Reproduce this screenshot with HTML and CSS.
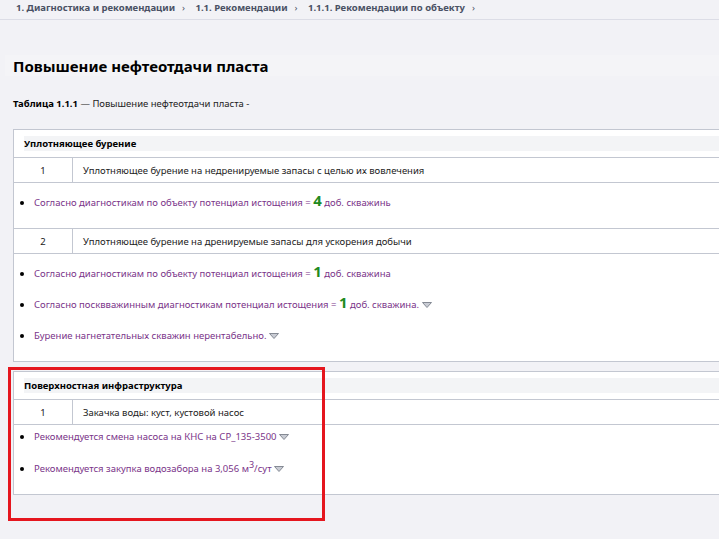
FILE: index.html
```html
<!DOCTYPE html>
<html lang="ru">
<head>
<meta charset="UTF-8">
<meta name="viewport" content="width=device-width, initial-scale=1.0">
<title>Повышение нефтеотдачи пласта</title>
<link rel="stylesheet" href="styles.css">
</head>
<body>
<div class="breadcrumbs">
    <span class="crumb">1. Диагностика и рекомендации</span><span class="sep">›</span>
    <span class="crumb">1.1. Рекомендации</span><span class="sep">›</span>
    <span class="crumb">1.1.1. Рекомендации по объекту</span><span class="sep">›</span>
</div>

<div class="page">
    <h1 class="title">Повышение нефтеотдачи пласта</h1>
    <div class="caption"><b>Таблица 1.1.1</b> — Повышение нефтеотдачи пласта -</div>

    <table class="rec-table">
        <tr><td colspan="2" class="group"><div class="group-name">Уплотняющее бурение</div></td></tr>
        <tr><td class="num">1</td><td class="name">Уплотняющее бурение на недренируемые запасы с целью их вовлечения</td></tr>
        <tr><td colspan="2" class="notes">
            <ul>
                <li>Согласно диагностикам по объекту потенциал истощения = <span class="val">4</span> доб. скважинь</li>
            </ul>
        </td></tr>
        <tr><td class="num">2</td><td class="name">Уплотняющее бурение на дренируемые запасы для ускорения добычи</td></tr>
        <tr><td colspan="2" class="notes">
            <ul>
                <li>Согласно диагностикам по объекту потенциал истощения = <span class="val">1</span> доб. скважина</li>
                <li>Согласно посквважинным диагностикам потенциал истощения = <span class="val">1</span> доб. скважина. <svg class="more" width="10" height="7" viewBox="0 0 10 7"><path d="M0.5 0.5H9.5L5 5.5Z" fill="#c9ccd4" stroke="#858a94"/></svg></li>
                <li>Бурение нагнетательных скважин нерентабельно. <svg class="more" width="10" height="7" viewBox="0 0 10 7"><path d="M0.5 0.5H9.5L5 5.5Z" fill="#c9ccd4" stroke="#858a94"/></svg></li>
            </ul>
        </td></tr>
    </table>

    <table class="rec-table">
        <tr><td colspan="2" class="group"><div class="group-name">Поверхностная инфраструктура</div></td></tr>
        <tr><td class="num">1</td><td class="name">Закачка воды: куст, кустовой насос</td></tr>
        <tr><td colspan="2" class="notes notes-tight">
            <ul>
                <li>Рекомендуется смена насоса на КНС на СР_135-3500 <svg class="more" width="10" height="7" viewBox="0 0 10 7"><path d="M0.5 0.5H9.5L5 5.5Z" fill="#c9ccd4" stroke="#858a94"/></svg></li>
                <li>Рекомендуется закупка водозабора на 3,056 м<sup>3</sup>/сут <svg class="more" width="10" height="7" viewBox="0 0 10 7"><path d="M0.5 0.5H9.5L5 5.5Z" fill="#c9ccd4" stroke="#858a94"/></svg></li>
            </ul>
        </td></tr>
    </table>
</div>

<div class="highlight"></div>
</body>
</html>
```

FILE: styles.css
```css
body {
    margin: 0;
    padding: 0;
    font-family: "Noto Sans", "Open Sans", sans-serif;
    background-color: #f2f2f6;
    color: #222;
    overflow: hidden;
    width: 719px;
    height: 539px;
}
.breadcrumbs {
    height: 20px;
    box-sizing: border-box;
    padding: 1px 0 0 16px;
    border-bottom: 1px solid #dcdde6;
    font-size: 9.5px;
    font-weight: bold;
    color: #4a5164;
    white-space: nowrap;
}
.sep {
    margin: 0 8px 0 7px;
    font-weight: normal;
}
.page {
    padding: 35px 0 0 0;
}
.title {
    margin: 0 0 0 5px;
    padding: 0 0 0 8px;
    height: 21px;
    line-height: 23px;
    background-color: #f4f4f7;
    font-size: 15px;
    font-weight: bold;
    color: #000;
}
.caption {
    margin: 21px 0 0 13px;
    font-size: 9.5px;
    color: #222;
}
.caption b {
    color: #000;
}
.rec-table {
    margin: 19px 0 0 13px;
    width: 760px;
    border-collapse: collapse;
    background-color: #fff;
    border: 1px solid #c3c7d1;
    font-size: 9.5px;
}
.rec-table + .rec-table {
    margin-top: 9px;
}
.rec-table td {
    border: 1px solid #c3c7d1;
    padding: 0;
}
.rec-table td.group {
    padding: 6px 10px 6px 10px;
}
.group-name {
    height: 15px;
    line-height: 15px;
    background-color: #f3f4f6;
    font-weight: bold;
    color: #000;
}
.num {
    width: 58px;
    height: 24px;
    text-align: center;
}
.rec-table td.name {
    padding-left: 10px;
}
.notes ul {
    list-style: none;
    margin: 0;
    padding: 12px 0 17px 0;
}
.notes-tight ul {
    padding: 4px 0 17px 0;
}
.notes li {
    position: relative;
    padding-left: 20px;
    height: 16px;
    line-height: 16px;
    margin-bottom: 15px;
    color: #7a3489;
}
.notes-tight li {
    margin-bottom: 16px;
}
.notes li:last-child {
    margin-bottom: 0;
}
.notes li::before {
    content: "";
    position: absolute;
    left: 6px;
    top: 6px;
    width: 4px;
    height: 4px;
    border-radius: 50%;
    background-color: #000;
}
.val {
    font-size: 15px;
    font-weight: bold;
    color: #1e8a1e;
    line-height: 10px;
}
.more {
    vertical-align: middle;
}
sup {
    font-size: 9px;
    line-height: 0;
}
.highlight {
    position: absolute;
    left: 8px;
    top: 367px;
    width: 311px;
    height: 148px;
    border: 3px solid #e5161e;
}
```
